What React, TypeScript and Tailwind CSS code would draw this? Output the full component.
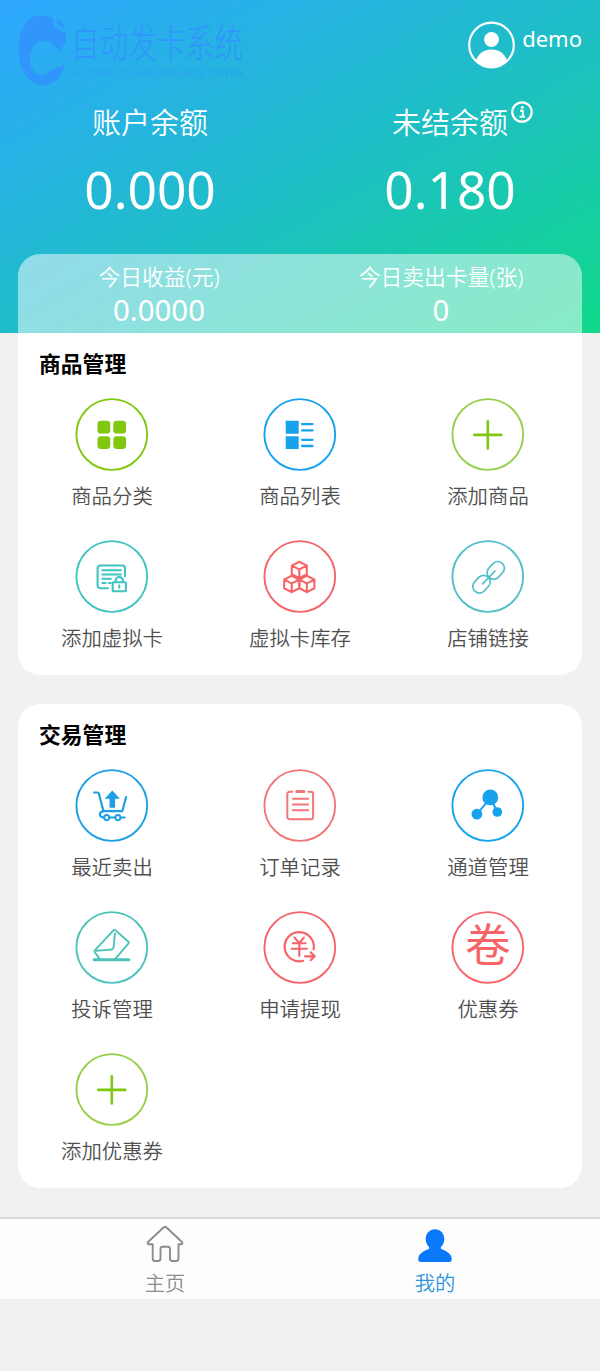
import React from 'react';

interface MenuItem {
  label: string;
  color: string;
  icon: React.ReactNode;
}

const GREEN = '#7fc80f';
const BLUE = '#17a2ee';
const TEAL = '#3fc4c4';
const RED = '#f76468';

const PlusIcon = <path d="M36.5 22.6v27M23 36.1h27" strokeWidth="2.6" />;

const Cube = ({ x, y }: { x: number; y: number }) => (
  <path
    transform={`translate(${x} ${y})`}
    d="M0 -8.1L7.5 -4.2V4.4L0 8.3L-7.5 4.4V-4.2ZM-7.5 -4.2L0 -0.4L7.5 -4.2M0 -0.4V8.3"
    strokeWidth="2.1"
  />
);

const goodsItems: MenuItem[] = [
  {
    label: '商品分类',
    color: GREEN,
    icon: (
      <g fill={GREEN} stroke="none">
        <rect x="22.2" y="22" width="12.8" height="12.8" rx="3.4" />
        <rect x="38" y="22" width="12.8" height="12.8" rx="3.4" />
        <rect x="22.2" y="37.4" width="12.8" height="12.8" rx="3.4" />
        <rect x="38" y="37.4" width="12.8" height="12.8" rx="3.4" />
      </g>
    ),
  },
  {
    label: '商品列表',
    color: BLUE,
    icon: (
      <>
        <path d="M22.4 22h13v13h-13zM22.4 37.4h13v12.8h-13z" fill={BLUE} stroke="none" />
        <path d="M38.8 25.3h10.4M38.8 31.6h10.4M38.8 41h10.4M38.8 47.2h10.4" strokeWidth="2.3" />
      </>
    ),
  },
  { label: '添加商品', color: '#97cf4b', icon: PlusIcon },
  {
    label: '添加虚拟卡',
    color: TEAL,
    icon: (
      <g strokeWidth="2.1">
        <path d="M32.5 47.5H25a2.7 2.7 0 0 1-2.7-2.7V27.4a2.7 2.7 0 0 1 2.7-2.7h22a2.7 2.7 0 0 1 2.7 2.7v8" />
        <path d="M27 29.4h18.7M27 33.7h18.7M27 38h8.6M27 42.2h3.4M33.4 42.2h2" strokeWidth="2" />
        <rect x="37.4" y="41.4" width="13.2" height="9" rx="0.8" />
        <path d="M40.4 41v-1.2a3.6 3.6 0 0 1 7.2 0V41M44 44.6v2.2" />
      </g>
    ),
  },
  {
    label: '虚拟卡库存',
    color: RED,
    icon: (
      <>
        <Cube x={36} y={29} />
        <Cube x={28.4} y={43} />
        <Cube x={43.6} y={43} />
      </>
    ),
  },
  {
    label: '店铺链接',
    color: '#52bfc9',
    icon: (
      <g strokeWidth="1.7">
        <rect x="34.8" y="23" width="19.2" height="13.2" rx="6.4" transform="rotate(-48 44.4 29.6)" />
        <rect x="20.6" y="36.8" width="19.2" height="13.2" rx="6.4" transform="rotate(-48 30.2 43.4)" />
        <path d="M31.3 43L43.7 30.2" />
      </g>
    ),
  },
];

const tradeItems: MenuItem[] = [
  {
    label: '最近卖出',
    color: '#1d9fe3',
    icon: (
      <>
        <path d="M18.8 22.7h3.6c.6 0 .9.3 1.1.9l4.7 17.8H47l3.8-14.2" strokeWidth="2.2" />
        <path d="M27.8 41.6c-3.6 0-4.6 5.4-.6 5.9h1.6M34.2 47.7H40M45.4 47.7h4" strokeWidth="2.2" />
        <circle cx="31.4" cy="47.8" r="2.6" strokeWidth="1.9" />
        <circle cx="42.6" cy="47.8" r="2.6" strokeWidth="1.9" />
        <path d="M37 20.8l7.6 8.2h-4.8v8.9h-5.6V29h-4.8z" fill="#1d9fe3" stroke="none" />
      </>
    ),
  },
  {
    label: '订单记录',
    color: '#f27679',
    icon: (
      <>
        <path d="M29 22h-2.8a2.2 2.2 0 0 0-2.2 2.2v23a2.2 2.2 0 0 0 2.2 2.2h21.4a2.2 2.2 0 0 0 2.2-2.2v-23a2.2 2.2 0 0 0-2.2-2.2H45" strokeWidth="2" />
        <path d="M33.6 21.6h7" strokeWidth="3" />
        <path d="M29.6 28.9h15.2M29.6 34.6h15.2M29.6 40.4h15.2" strokeWidth="2" />
      </>
    ),
  },
  {
    label: '通道管理',
    color: BLUE,
    icon: (
      <g fill={BLUE}>
        <path d="M39 28L26 44M39 28l7 14" strokeWidth="2" />
        <circle cx="39" cy="27.6" r="7.9" stroke="none" />
        <circle cx="25.6" cy="44.3" r="5.4" stroke="none" />
        <circle cx="46" cy="42.2" r="4.8" stroke="none" />
      </g>
    ),
  },
  {
    label: '投诉管理',
    color: '#4cc3b9',
    icon: (
      <>
        <path d="M24.7 47.6L19.3 40.2Q18.7 39.3 19.5 38.5L38.4 18.3Q39.2 17.600 40 18.300L53.100 29.900Q53.900 30.700 53.200 31.600L39.600 47.600" strokeWidth="1.9" />
        <path d="M39.600 21.600L38.400 34.800Q38.100 37.600 35.600 37.800L21 39" strokeWidth="1.9" />
        <path d="M18.800 48h34.800" strokeWidth="3" />
      </>
    ),
  },
  {
    label: '申请提现',
    color: RED,
    icon: (
      <g strokeWidth="2.2">
        <path d="M50.3 37.6A14.6 14.6 0 1 0 39.8 49" />
        <path d="M31.2 25.8l4.8 5.4 4.6-5.4M29.6 31.4h12.6M28.4 37h15.2M36 31.4v12.8" strokeWidth="2.1" />
        <path d="M41.8 44.5h9.4M47.4 40.6l4 3.9-4 3.9" />
      </g>
    ),
  },
  { label: '优惠券', color: RED, icon: null },
  { label: '添加优惠券', color: '#97cf4b', icon: PlusIcon },
];

const MenuCell: React.FC<{ item: MenuItem }> = ({ item }) => (
  <div className="flex h-[142px] flex-col items-center">
    <svg width="74" height="73" viewBox="-0.3 0 74 73" fill="none" stroke={item.color} strokeLinecap="round" strokeLinejoin="round">
      <circle cx="36.5" cy="36.5" r="35.4" strokeWidth="1.9" />
      {item.icon && (
        <g transform="translate(0 0.8)" stroke={item.icon === PlusIcon ? GREEN : item.color}>
          {item.icon}
        </g>
      )}
      {!item.icon && (
        <text x="36.5" y="51" textAnchor="middle" fontSize="45.5" fill={item.color} stroke="none">
          卷
        </text>
      )}
    </svg>
    <span className="mt-2.5 text-[20.4px] leading-[30px] font-[350] whitespace-nowrap text-[#505050]">{item.label}</span>
  </div>
);

const MenuSection: React.FC<{ title: string; items: MenuItem[] }> = ({ title, items }) => (
  <>
    <h2 className="px-[21px] text-[21.8px] leading-[32px] font-bold text-black">{title}</h2>
    <div className="mt-[18px] grid grid-cols-3">
      {items.map((item) => (
        <MenuCell key={item.label} item={item} />
      ))}
    </div>
  </>
);

const Logo = () => (
  <svg width="260" height="90" viewBox="0 0 260 90" className="shrink-0" fill="#3096fb">
    <path d="M39 15.500C46 15.500 51 16.500 53 18.500C53.500 21 52.500 24 54.500 27C57 30.500 61 31 64 32C66 34 66.500 38 66 41.500C64 45 61 48 60.500 53C59 50 57.500 48.500 55.500 47C53 43 49 41 44 41C35 41 29.500 49 30 60C30.500 70 36 76 43 75.500C46 75 48 73 50 70C55 69 60 66.500 65 64C62 77 54 85 44 85C28 85 18.500 69 18.500 49C18.500 30 28 15.500 39 15.500Z" />
    <path d="M56 20.500C60 19 63.500 22.500 64.500 28C62 27.500 60.500 25.500 59 25C57.500 24 56 23 56 20.500Z" />
    <text transform="translate(71 57) scale(1 1.340)" fontSize="28.500" textLength="172" className="font-light">
      自动发卡系统
    </text>
    <text x="73" y="77" fontSize="11" textLength="171" lengthAdjust="spacingAndGlyphs" opacity="0.5">
      AUTOMATIC CARD ISSUANCE SYSTEM
    </text>
  </svg>
);

const App: React.FC = () => {
  return (
    <div className="min-h-[1371px] w-[600px] bg-[#f1f1f1] font-['Noto_Sans','Noto_Sans_CJK_SC',sans-serif]">
      <header className="flex h-[333px] flex-col bg-[linear-gradient(to_bottom_right,#2ea7ff_0%,#1fbdc9_50%,#10d98a_100%)] text-white">
        <div className="flex h-[90px] items-start justify-between pr-[18px]">
          <Logo />
          <div className="flex items-start gap-[7px] pt-[21px]">
            <svg width="47" height="48" viewBox="0 0 47 48" fill="white">
              <circle cx="23.500" cy="24" r="22.300" fill="none" stroke="white" strokeWidth="2.200" />
              <circle cx="23.500" cy="18.500" r="7.400" />
              <path d="M7.500 40C11 32 16 28.500 23.500 28.500S36 32 39.500 40A22 22 0 0 1 7.500 40Z" />
            </svg>
            <span className="text-[22px] leading-[35px]">demo</span>
          </div>
        </div>

        <div className="grid grid-cols-2 text-center">
          <div>
            <p className="mt-[13px] text-[29px] leading-10 font-[350]">账户余额</p>
            <p className="mt-4 text-[51.5px] leading-[60px]">0.000</p>
          </div>
          <div>
            <p className="mt-[13px] text-[29px] leading-10 font-[350]">
              <span className="relative inline-block">
                未结余额
                <svg className="absolute -top-0.5 left-full ml-[3px]" width="22" height="22" viewBox="0 0 22 22" fill="none" stroke="white">
                  <circle cx="11" cy="11" r="9.700" strokeWidth="2.200" />
                  <path d="M9 9.800H11.800V15.500M8.500 15.700H14" strokeWidth="1.900" />
                  <circle cx="11.300" cy="6.500" r="1.400" fill="white" stroke="none" />
                </svg>
              </span>
            </p>
            <p className="mt-4 text-[51.5px] leading-[60px]">0.180</p>
          </div>
        </div>

        <div className="mx-[18px] mt-auto grid h-[79px] grid-cols-2 rounded-t-[22px] bg-white/50 pt-2 text-center">
          <div>
            <p className="text-[21.8px] leading-[30px] font-[350]">今日收益(元)</p>
            <p className="text-[29.4px] leading-9">0.0000</p>
          </div>
          <div>
            <p className="text-[21.8px] leading-[30px] font-[350]">今日卖出卡量(张)</p>
            <p className="text-[29.4px] leading-9">0</p>
          </div>
        </div>
      </header>

      <section className="mx-[18px] h-[342px] rounded-b-[22px] bg-white pt-[15px]">
        <MenuSection title="商品管理" items={goodsItems} />
      </section>

      <section className="mx-[18px] mt-[29px] h-[484px] rounded-[22px] bg-white pt-[15px]">
        <MenuSection title="交易管理" items={tradeItems} />
      </section>

      <nav className="mt-[29px] grid h-[82px] grid-cols-2 border-t-2 border-[#d8d8d8] bg-[#fdfdfd] px-[30px] text-[20.3px] leading-[32px] font-[350]">
        <a className="flex flex-col items-center pt-[6px] text-[#8c8c8c]">
          <svg width="38" height="38" viewBox="0 0 38 38" fill="none" stroke="currentColor" strokeWidth="1.9" strokeLinejoin="round">
            <path d="M17.700 2.200Q19 1.200 20.300 2.200L36.200 17.200Q37 19.200 35 19.200H32.500V33.500Q32.500 36 30 36H26.300Q24 36 24 33.500V24Q24 21.700 21.700 21.700H16.800Q14.500 21.700 14.500 24V33.500Q14.500 36 12 36H9Q6.700 36 6.700 33.500V19.200H3Q1 19.200 1.800 17.200Z" />
          </svg>
          <span className="mt-1">主页</span>
        </a>
        <a className="flex flex-col items-center pt-[6px] text-[#2d95dd]">
          <svg width="38" height="38" viewBox="0 -1 38 38" fill="#0a78fb">
            <path d="M19 3.200C24.500 3.200 28.300 7.500 28.300 13C28.300 16.500 26.700 19.500 24.700 21.500V22.500C27.500 24.200 35.700 26.500 35.700 32.500V33.500Q35.700 36 33 36H5Q2.300 36 2.300 33.500V32.500C2.300 26.500 10.500 24.200 13.300 22.500V21.500C11.300 19.500 9.700 16.500 9.700 13C9.700 7.500 13.500 3.200 19 3.200Z" />
          </svg>
          <span className="mt-1">我的</span>
        </a>
      </nav>
    </div>
  );
};

export default App;
